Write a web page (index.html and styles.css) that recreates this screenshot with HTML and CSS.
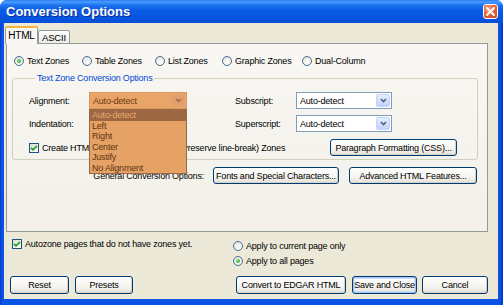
FILE: index.html
```html
<!DOCTYPE html>
<html>
<head>
<meta charset="utf-8">
<title>Conversion Options</title>
<link rel="stylesheet" href="styles.css">
</head>
<body>
<div class="window">
  <div class="titlebar">
    <span class="title">Conversion Options</span>
    <span class="close"><svg width="9" height="9" viewBox="0 0 9 9"><path d="M1 1L8 8M8 1L1 8" stroke="#fff" stroke-width="1.8" stroke-linecap="round"/></svg></span>
  </div>
  <div class="client">
    <div class="tabs">
      <div class="tab active">HTML</div>
      <div class="tab">ASCII</div>
    </div>
    <div class="panel">
      <div class="zones">
        <label class="opt"><span class="radio on"></span>Text Zones</label>
        <label class="opt"><span class="radio"></span>Table Zones</label>
        <label class="opt"><span class="radio"></span>List Zones</label>
        <label class="opt"><span class="radio"></span>Graphic Zones</label>
        <label class="opt"><span class="radio"></span>Dual-Column</label>
      </div>
      <fieldset class="group">
        <legend>Text Zone Conversion Options</legend>
        <div class="grid">
          <span class="lbl">Alignment:</span>
          <div class="combo-wrap">
            <div class="combo orange"><span class="val">Auto-detect</span><span class="arrow o"><svg width="7" height="5" viewBox="0 0 7 5"><path d="M1 1L3.5 3.5L6 1" fill="none" stroke="#a06a48" stroke-width="1.5"/></svg></span></div>
            <ul class="list">
              <li class="sel">Auto-detect</li>
              <li>Left</li>
              <li>Right</li>
              <li>Center</li>
              <li>Justify</li>
              <li>No Alignment</li>
            </ul>
          </div>
          <span class="lbl">Subscript:</span>
          <div class="combo"><span class="val">Auto-detect</span><span class="arrow"><svg width="7" height="5" viewBox="0 0 7 5"><path d="M1 1L3.5 3.5L6 1" fill="none" stroke="#4d6185" stroke-width="1.6"/></svg></span></div>
          <span class="lbl">Indentation:</span>
          <div class="combo"><span class="val">Auto-detect</span><span class="arrow"><svg width="7" height="5" viewBox="0 0 7 5"><path d="M1 1L3.5 3.5L6 1" fill="none" stroke="#4d6185" stroke-width="1.6"/></svg></span></div>
          <span class="lbl">Superscript:</span>
          <div class="combo"><span class="val">Auto-detect</span><span class="arrow"><svg width="7" height="5" viewBox="0 0 7 5"><path d="M1 1L3.5 3.5L6 1" fill="none" stroke="#4d6185" stroke-width="1.6"/></svg></span></div>
        </div>
        <div class="row3">
          <label class="chk"><span class="box"><svg width="8" height="8" viewBox="0 0 8 8"><path d="M1 3.8L3 5.8L7 1.8" fill="none" stroke="#21a121" stroke-width="1.7"/></svg></span>Create HTML Tables For Fixed Text (Preserve line-break) Zones</label>
          <button class="btn para">Paragraph Formatting (CSS)...</button>
        </div>
      </fieldset>
      <div class="general">
        <span class="lbl">General Conversion Options:</span>
        <button class="btn fonts">Fonts and Special Characters...</button>
        <button class="btn adv">Advanced HTML Features...</button>
      </div>
    </div>
    <div class="lower">
      <label class="chk"><span class="box"><svg width="8" height="8" viewBox="0 0 8 8"><path d="M1 3.8L3 5.8L7 1.8" fill="none" stroke="#21a121" stroke-width="1.7"/></svg></span>Autozone pages that do not have zones yet.</label>
      <div class="apply">
        <label class="opt"><span class="radio"></span>Apply to current page only</label>
        <label class="opt"><span class="radio on"></span>Apply to all pages</label>
      </div>
    </div>
    <div class="buttons">
      <button class="btn reset">Reset</button>
      <button class="btn presets">Presets</button>
      <button class="btn convert">Convert to EDGAR HTML</button>
      <button class="btn save">Save and Close</button>
      <button class="btn cancel">Cancel</button>
    </div>
  </div>
</div>
</body>
</html>
```
FILE: styles.css
```css
* { box-sizing: border-box; }
html, body { margin: 0; padding: 0; }
body {
  width: 503px; height: 305px; overflow: hidden;
  font-family: "Liberation Sans", Arial, sans-serif;
  font-size: 9px; letter-spacing: -0.2px; color: #000;
}
.window {
  width: 503px; height: 305px;
  display: flex; flex-direction: column;
  background: linear-gradient(to right, #0836c8 0, #0a55e6 2px, #0a55e6 499px, #0638c4 503px);
  border-radius: 7px 7px 0 0;
}
.titlebar {
  height: 23px; flex: none;
  display: flex; align-items: center; justify-content: space-between;
  padding: 0 5px 0 6px;
  border-radius: 7px 7px 0 0;
  background: linear-gradient(to bottom, #2a7bf0 0, #4a9cff 2px, #1f74ee 5px, #0a5ce6 10px, #0656e2 16px, #0652de 20px, #0a4fd4 23px);
}
.title {
  color: #fff; font-weight: bold; font-size: 13px; letter-spacing: 0;
  text-shadow: 1px 1px 0 #0b2f9a;
}
.close {
  width: 15px; height: 15px;
  border: 1px solid #fff; border-radius: 3px;
  background: radial-gradient(circle at 35% 30%, #f2a58a 0, #e4683d 45%, #c8401b 100%);
  display: flex; align-items: center; justify-content: center;
}
.client {
  flex: 1;
  margin: 0 5px 6px 4px;
  background: #ece9d8;
  display: flex; flex-direction: column;
}
.tabs {
  height: 21px; flex: none;
  display: flex; align-items: flex-end;
  padding: 3px 0 0 1px;
  margin-bottom: -1px;
  position: relative; z-index: 1;
}
.tab {
  height: 14px; width: 32px;
  display: flex; align-items: center; justify-content: center;
  border: 1px solid #919b9c; border-radius: 2px 2px 0 0;
  background: linear-gradient(#ffffff, #ecebe5);
  font-size: 9.5px;
}
.tab.active {
  height: 18px; width: 33px;
  border-bottom: none;
  border-top: 2px solid #f7b43a;
  background: #f8f7f3;
  padding-bottom: 1px;
  font-size: 10px;
}
.panel {
  flex: none;
  margin-left: 2px;
  width: 482px; height: 189px;
  border: 1px solid #919b9c;
  background: linear-gradient(#f8f7f3, #f2f0e8);
  padding: 11px 10px 0 7px;
}
.zones {
  height: 11px;
  display: grid;
  grid-template-columns: 68px 73px 67px 80px auto;
  align-items: center;
}
.opt { display: flex; align-items: center; gap: 3px; white-space: nowrap; }
.radio {
  width: 10px; height: 10px; flex: none;
  border-radius: 50%;
  border: 1px solid #4a6e94;
  background: radial-gradient(circle at 60% 65%, #ffffff 0, #f2f1ec 40%, #d9d8d0 100%);
  display: flex; align-items: center; justify-content: center;
}
.radio.on::after {
  content: ""; width: 4px; height: 4px; border-radius: 50%;
  background: radial-gradient(circle at 35% 35%, #7edc7e, #21a121);
}
.group {
  margin: 7px 0 0 -2px;
  width: 466px;
  border: 1px solid #d0d0bf; border-radius: 3px;
  padding: 8px 0 3px 16px;
  min-width: 0;
}
.group legend {
  color: #0046d5;
  line-height: 11px; height: 11px;
  padding: 0 2px; margin-left: 6px;
}
.grid {
  display: grid;
  grid-template-columns: 60px 98px 48px 61px 96px;
  grid-template-rows: 17px 17px;
  row-gap: 6px;
  align-items: center;
}
.lbl { white-space: nowrap; }
.grid .lbl:nth-child(3), .grid .lbl:nth-child(7) { grid-column: 4; }
.combo-wrap { position: relative; height: 17px; }
.combo {
  height: 17px;
  display: flex; align-items: center; justify-content: space-between;
  border: 1px solid #7f9db9;
  background: #fff;
  padding: 0 1px 0 3px;
}
.combo .arrow {
  width: 14px; height: 13px;
  border: 1px solid #c3d3fd; border-radius: 2px;
  background: linear-gradient(#e6eefc, #c1d3fb);
  display: flex; align-items: center; justify-content: center;
}
.combo.orange {
  background: #e9a467;
  border-color: #d99a62;
  color: #6a3b17;
}
.combo .arrow.o {
  border-color: #e7a46c;
  background: #e19f6b;
}
.list {
  position: absolute; top: 17px; left: 0; z-index: 5;
  width: 98px; margin: 0; padding: 0;
  list-style: none;
  background: #e6a265;
  border: 1px solid #9b6841;
  color: #5e3312;
}
.list li { height: 10.5px; line-height: 10.5px; padding-left: 2px; }
.list li.sel { background: #9d6741; color: #e8a872; }
.row3 {
  margin-top: 7px;
  height: 17px;
  display: flex; align-items: center;
  padding-right: 20px;
}
.chk { display: flex; align-items: center; gap: 3px; white-space: nowrap; }
.box {
  width: 10px; height: 10px; flex: none;
  border: 1px solid #1c5180;
  background: linear-gradient(135deg, #dcdcd6, #ffffff);
  display: flex; align-items: center; justify-content: center;
}
.btn {
  font-family: inherit; font-size: 9px; letter-spacing: -0.2px; color: #000;
  height: 17px; padding: 0;
  border: 1px solid #003c74; border-radius: 3px;
  background: linear-gradient(#ffffff 0, #f5f4ef 60%, #e3e0d6 100%);
  box-shadow: inset -1px -1px 0 #d6d0c5;
  white-space: nowrap;
}
.row3 .para { margin-left: auto; width: 127px; }
.general {
  margin-top: 7px;
  height: 17px;
  display: flex; align-items: center; justify-content: flex-end;
}
.general .lbl { margin-right: 9px; }
.fonts { width: 126px; flex: none; }
.adv { width: 128px; margin-left: 10px; flex: none; }
.lower {
  flex: none;
  margin-top: 7px;
  display: grid;
  grid-template-columns: 221px auto;
  padding-left: 8px;
}
.lower .chk { height: 10px; align-self: start; }
.apply { display: flex; flex-direction: column; gap: 5px; margin-top: 2px; }
.apply .opt { height: 10px; }
.buttons {
  flex: none;
  margin-top: 10px;
  display: flex; align-items: center;
  padding-left: 6px;
}
.buttons .btn { height: 18px; flex: none; }
.reset { width: 59px; }
.presets { width: 58px; margin-left: 6px; }
.convert { width: 110px; margin-left: auto; }
.save {
  width: 65px; margin-left: 6px;
  box-shadow: inset 0 0 0 1px #a8c4f0, inset 0 0 0 2px #cddcf6;
}
.cancel { width: 66px; margin-left: 5px; margin-right: 10px; }
```
